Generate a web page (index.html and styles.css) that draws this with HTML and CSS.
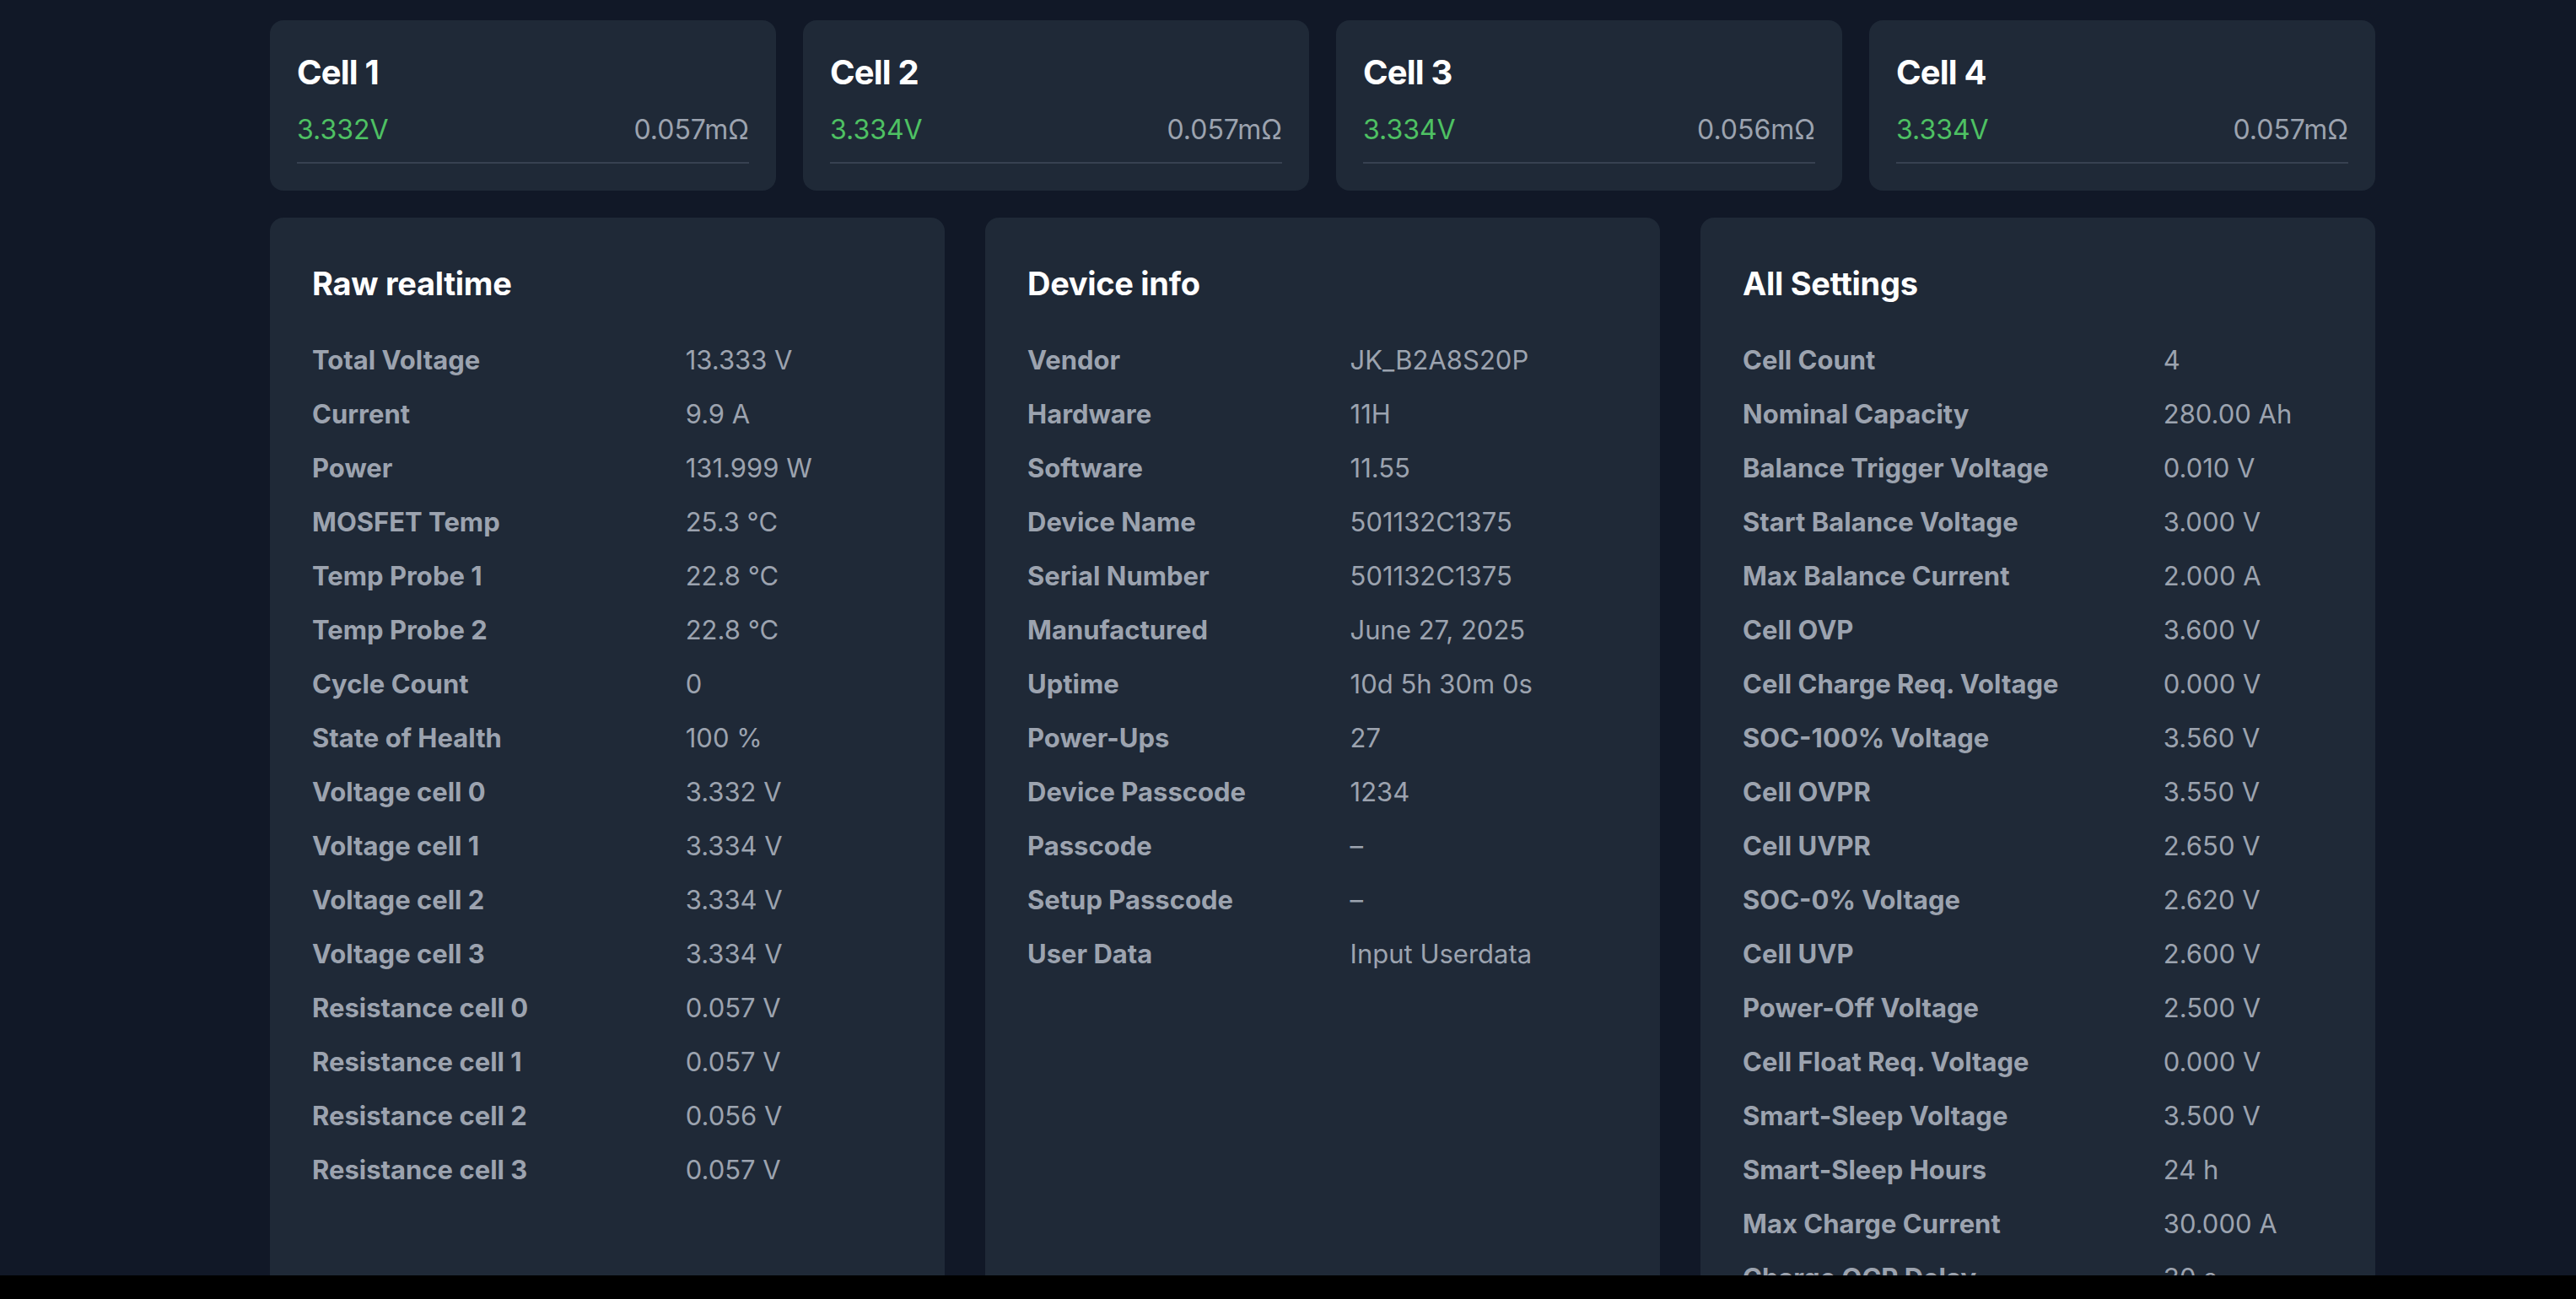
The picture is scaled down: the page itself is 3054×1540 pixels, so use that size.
FILE: index.html
```html
<!DOCTYPE html>
<html lang="en">
<head>
<meta charset="utf-8">
<title>BMS Dashboard</title>
<link rel="stylesheet" href="styles.css">
</head>
<body>
<div class="viewport">
  <main class="container">
    <section class="cells">
      <div class="cell">
        <h3 class="cell-title">Cell 1</h3>
        <div class="cell-row"><span class="volt">3.332V</span><span class="res">0.057mΩ</span></div>
        <div class="bar"></div>
      </div>
      <div class="cell">
        <h3 class="cell-title">Cell 2</h3>
        <div class="cell-row"><span class="volt">3.334V</span><span class="res">0.057mΩ</span></div>
        <div class="bar"></div>
      </div>
      <div class="cell">
        <h3 class="cell-title">Cell 3</h3>
        <div class="cell-row"><span class="volt">3.334V</span><span class="res">0.056mΩ</span></div>
        <div class="bar"></div>
      </div>
      <div class="cell">
        <h3 class="cell-title">Cell 4</h3>
        <div class="cell-row"><span class="volt">3.334V</span><span class="res">0.057mΩ</span></div>
        <div class="bar"></div>
      </div>
    </section>

    <section class="panels">
      <div class="panel">
        <h2 class="panel-title">Raw realtime</h2>
        <table class="kv">
          <tr><th>Total Voltage</th><td>13.333 V</td></tr>
          <tr><th>Current</th><td>9.9 A</td></tr>
          <tr><th>Power</th><td>131.999 W</td></tr>
          <tr><th>MOSFET Temp</th><td>25.3 °C</td></tr>
          <tr><th>Temp Probe 1</th><td>22.8 °C</td></tr>
          <tr><th>Temp Probe 2</th><td>22.8 °C</td></tr>
          <tr><th>Cycle Count</th><td>0</td></tr>
          <tr><th>State of Health</th><td>100 %</td></tr>
          <tr><th>Voltage cell 0</th><td>3.332 V</td></tr>
          <tr><th>Voltage cell 1</th><td>3.334 V</td></tr>
          <tr><th>Voltage cell 2</th><td>3.334 V</td></tr>
          <tr><th>Voltage cell 3</th><td>3.334 V</td></tr>
          <tr><th>Resistance cell 0</th><td>0.057 V</td></tr>
          <tr><th>Resistance cell 1</th><td>0.057 V</td></tr>
          <tr><th>Resistance cell 2</th><td>0.056 V</td></tr>
          <tr><th>Resistance cell 3</th><td>0.057 V</td></tr>
        </table>
      </div>

      <div class="panel">
        <h2 class="panel-title">Device info</h2>
        <table class="kv">
          <tr><th>Vendor</th><td>JK_B2A8S20P</td></tr>
          <tr><th>Hardware</th><td>11H</td></tr>
          <tr><th>Software</th><td>11.55</td></tr>
          <tr><th>Device Name</th><td>501132C1375</td></tr>
          <tr><th>Serial Number</th><td>501132C1375</td></tr>
          <tr><th>Manufactured</th><td>June 27, 2025</td></tr>
          <tr><th>Uptime</th><td>10d 5h 30m 0s</td></tr>
          <tr><th>Power-Ups</th><td>27</td></tr>
          <tr><th>Device Passcode</th><td>1234</td></tr>
          <tr><th>Passcode</th><td>–</td></tr>
          <tr><th>Setup Passcode</th><td>–</td></tr>
          <tr><th>User Data</th><td>Input Userdata</td></tr>
        </table>
      </div>

      <div class="panel">
        <h2 class="panel-title">All Settings</h2>
        <table class="kv">
          <tr><th>Cell Count</th><td>4</td></tr>
          <tr><th>Nominal Capacity</th><td>280.00 Ah</td></tr>
          <tr><th>Balance Trigger Voltage</th><td>0.010 V</td></tr>
          <tr><th>Start Balance Voltage</th><td>3.000 V</td></tr>
          <tr><th>Max Balance Current</th><td>2.000 A</td></tr>
          <tr><th>Cell OVP</th><td>3.600 V</td></tr>
          <tr><th>Cell Charge Req. Voltage</th><td>0.000 V</td></tr>
          <tr><th>SOC-100% Voltage</th><td>3.560 V</td></tr>
          <tr><th>Cell OVPR</th><td>3.550 V</td></tr>
          <tr><th>Cell UVPR</th><td>2.650 V</td></tr>
          <tr><th>SOC-0% Voltage</th><td>2.620 V</td></tr>
          <tr><th>Cell UVP</th><td>2.600 V</td></tr>
          <tr><th>Power-Off Voltage</th><td>2.500 V</td></tr>
          <tr><th>Cell Float Req. Voltage</th><td>0.000 V</td></tr>
          <tr><th>Smart-Sleep Voltage</th><td>3.500 V</td></tr>
          <tr><th>Smart-Sleep Hours</th><td>24 h</td></tr>
          <tr><th>Max Charge Current</th><td>30.000 A</td></tr>
          <tr><th>Charge OCP Delay</th><td>30 s</td></tr>
        </table>
      </div>
    </section>
  </main>
</div>
</body>
</html>
```

FILE: styles.css
```css
html, body {
  margin: 0;
  padding: 0;
  background: #000000;
}

body {
  font-family: "Inter", "Noto Sans", "Liberation Sans", sans-serif;
  color: #9ca3af;
}

.viewport {
  height: 1512px;
  overflow: hidden;
  background: #111827;
}

.container {
  width: 2496px;
  padding: 24px 0 0 320px;
}

.cells {
  display: grid;
  grid-template-columns: repeat(4, 1fr);
  gap: 32px;
}

.cell {
  background: #1f2937;
  border-radius: 16px;
  padding: 32px;
}

.cell-title {
  margin: 2px 0 0 0;
  font-size: 40px;
  line-height: 56px;
  font-weight: 700;
  color: #ffffff;
  letter-spacing: -0.8px;
}

.cell-row {
  display: flex;
  justify-content: space-between;
  margin-top: 16px;
  font-size: 32px;
  line-height: 48px;
}

.volt {
  color: #4ec163;
}

.res {
  color: #9ca3af;
}

.bar {
  margin-top: 14px;
  height: 2px;
  background: #374151;
}

.panels {
  display: grid;
  grid-template-columns: repeat(3, 1fr);
  gap: 48px;
  margin-top: 32px;
}

.panel {
  background: #1f2937;
  border-radius: 16px;
  padding: 48px 48px 48px 50px;
}

.panel-title {
  margin: 4px 0 33px 0;
  font-size: 38px;
  line-height: 52px;
  font-weight: 700;
  color: #ffffff;
  letter-spacing: -0.3px;
}

.kv {
  width: 100%;
  border-collapse: collapse;
  font-size: 31px;
  line-height: 1.5;
}

.kv th,
.kv td {
  padding: 0;
  height: 64px;
  text-align: left;
  vertical-align: middle;
  white-space: nowrap;
}

.kv th {
  font-weight: 700;
  color: #9ca3af;
}

.kv td {
  font-weight: 400;
  color: #9ca3af;
}
```
